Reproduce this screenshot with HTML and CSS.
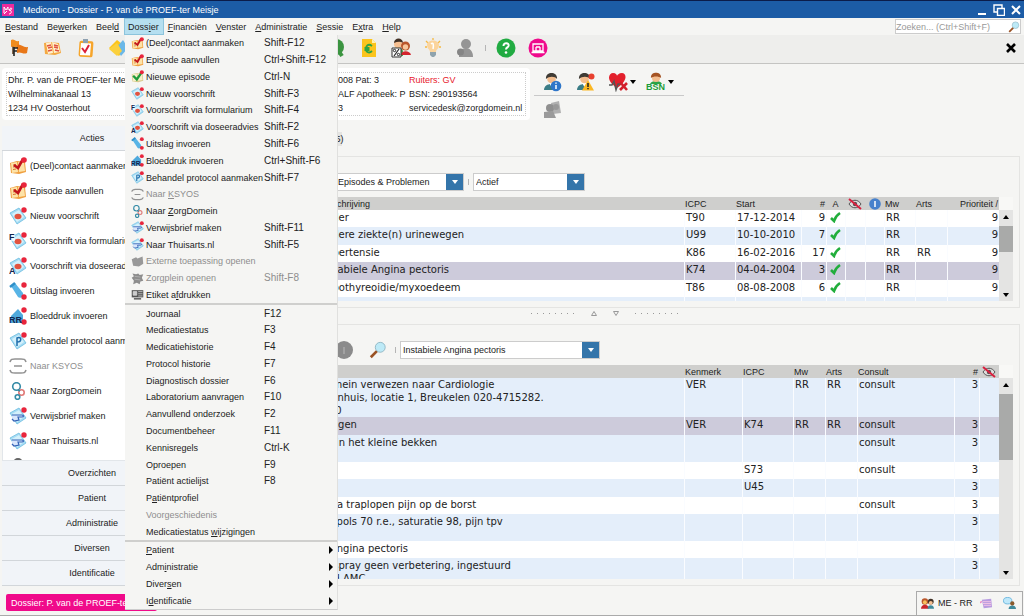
FILE: index.html
```html
<!DOCTYPE html>
<html lang="nl">
<head>
<meta charset="utf-8">
<title>Medicom - Dossier</title>
<link rel="stylesheet" href="styles.css">
</head>
<body>
<svg class="sprite" aria-hidden="true">
  <symbol id="i-book" viewBox="0 0 18 18"><path d="M1 6l7-2 8 1 1 10-7 2-8-1z" fill="#f0a040"/><path d="M2 6l6-1 1 10-6 1zM9 5l6 1 1 8-6 1z" fill="#fde3a8"/><path d="M4 8l3-.5M4 10l3-.5M4 12.500l3-.5" stroke="#d8732c"/><path d="M5 8l4 3 5-9" fill="none" stroke="#c2141c" stroke-width="2.600"/><circle cx="15" cy="3" r="2.800" fill="#e8253c"/></symbol>
  <symbol id="i-bookgreen" viewBox="0 0 18 18"><path d="M1 6l7-2 8 1 1 10-7 2-8-1z" fill="#d9c98c"/><path d="M2 6l6-1 1 10-6 1zM9 5l6 1 1 8-6 1z" fill="#f6efc8"/><path d="M3 8l5 5 7-10" fill="none" stroke="#1e9b3b" stroke-width="3.200"/><circle cx="15" cy="3" r="2.800" fill="#e8253c"/></symbol>
  <symbol id="i-sheet" viewBox="0 0 18 18"><path d="M1 6l9-5 7 10-9 6z" fill="#a5dcf4" stroke="#6dbce0" stroke-width=".8"/><path d="M3 7l7-4 5 7-7 5z" fill="#d4f0fb"/></symbol>
  <symbol id="i-rx" viewBox="0 0 18 18"><use href="#i-sheet"/><ellipse cx="9" cy="9.500" rx="3.500" ry="2.800" fill="#e2533f"/><circle cx="15" cy="3" r="2.700" fill="#e8253c"/></symbol>
  <symbol id="i-rxf" viewBox="0 0 18 18"><use href="#i-rx"/><path d="M0 0h6v9H0z" fill="#fff" opacity=".7"/><text x="0" y="8" class="glyph">F</text></symbol>
  <symbol id="i-rxa" viewBox="0 0 18 18"><use href="#i-rx"/><text x="0" y="17" class="glyph">A</text></symbol>
  <symbol id="i-tube" viewBox="0 0 18 18"><path d="M2 4l4-3 8 10c1 4-3 6-5 4z" fill="#58b4e6"/><path d="M1 5l5-4" stroke="#2f8fc8" stroke-width="2.500"/><circle cx="15" cy="3" r="2.700" fill="#e8253c"/><circle cx="15" cy="15" r="2.700" fill="#e8253c"/></symbol>
  <symbol id="i-rr" viewBox="0 0 18 18"><path d="M2 9l7-7 5 6v8H2z" fill="#4fa9dc"/><circle cx="15" cy="3" r="2.700" fill="#e8253c"/><circle cx="15" cy="15" r="2.700" fill="#e8253c"/><text x="0" y="16" class="glyph">RR</text></symbol>
  <symbol id="i-prot" viewBox="0 0 18 18"><use href="#i-sheet"/><path d="M8 14V6c5-2 5 4 0 4" fill="none" stroke="#1d6cab" stroke-width="1.500"/><circle cx="15" cy="3" r="2.700" fill="#e8253c"/></symbol>
  <symbol id="i-ksyos" viewBox="0 0 18 18"><path d="M1 5c1-3 2-3 5-3h6c3 0 4 0 5 3M1 13c1 3 2 3 5 3h6c3 0 4 0 5-3M5 9h8" fill="none" stroke="#929292" stroke-width="1.600"/></symbol>
  <symbol id="i-zd" viewBox="0 0 18 18"><g fill="none" stroke-width="1.600"><circle cx="7.500" cy="4.500" r="3.800" stroke="#348ba6"/><circle cx="12.500" cy="10.500" r="2.700" stroke="#e07a78"/><circle cx="8.500" cy="15" r="2.300" stroke="#348ba6"/><path d="M9 8l2 1" stroke="#348ba6"/></g></symbol>
  <symbol id="i-hand" viewBox="0 0 18 18"><use href="#i-sheet"/><path d="M3 8h10c2 0 2 2 0 2h-4l1 3-5 1-2-2" fill="#d8e6fc" stroke="#3462b6" stroke-width="1.200"/><circle cx="15" cy="3" r="2.700" fill="#e8253c"/></symbol>
  <symbol id="i-ext" viewBox="0 0 18 18"><path d="M1 6l6-3 2 2 7-3 1 10-6 4-8-1z" fill="#999"/></symbol>
  <symbol id="i-plein" viewBox="0 0 18 18"><path d="M2 2l5 1 3-1 2 2 5-1-2 5 2 4-4 1-1 4-4-2-5 2 1-5-3-4 3-2z" fill="#8d8d8d"/><path d="M5 6l8 1M5 10l8 1" stroke="#bbb"/></symbol>
  <symbol id="i-label" viewBox="0 0 18 18"><path d="M1 3h16v10H1z" fill="#555"/><path d="M3 5h5v5H3zM10 5h6M10 8h6M10 11h6" fill="#ccc" stroke="#ddd"/><path d="M4 15h10" stroke="#555" stroke-width="2"/></symbol>
  <symbol id="i-person-dot" viewBox="0 0 18 18"><path d="M5 18c0-8 8-8 9 0z" fill="#777"/><circle cx="9" cy="6" r="5" fill="#666"/></symbol>
  <symbol id="i-flag" viewBox="0 0 20 20"><path d="M4 3v13" stroke="#5a3a1c" stroke-width="1.500"/><path d="M2 2c3-2 4 2 8 1v7c-4 1-5-3-8-1z" fill="#f08c1e"/><path d="M8 7c3-2 6 3 11 2l-1 6c-4 2-6-2-10 0z" fill="#e87718"/><path d="M5 9v9M5 10h4M5 13h3" stroke="#222" stroke-width="1.600"/></symbol>
  <symbol id="i-news" viewBox="0 0 20 20"><path d="M2 5l6-1 9 1 2 10-6 2-10-1z" fill="#f4a942"/><path d="M4 5l5-1 2 11-5 1zM10 4l6 2 2 8-6 1z" fill="#fff0cd"/><path d="M5 8l4-1M6 10l4-1M6 13l4-1M12 7l4 1M12 9l4 1M13 12l4 1" stroke="#e0523e" stroke-width="1.300"/></symbol>
  <symbol id="i-clip" viewBox="0 0 20 20"><rect x="4" y="3" width="14" height="16" rx="2" fill="#f6a52b" transform="rotate(4 11 11)"/><path d="M6 5l10 .5-1 12-10-.5z" fill="#fff"/><path d="M8 1h5v4H8z" fill="#8da0b0"/><path d="M7 10l3 4 4-7" fill="none" stroke="#dc1f38" stroke-width="2"/></symbol>
  <symbol id="i-folder" viewBox="0 0 20 20"><path d="M1 10l8-8 9 7-7 9z" fill="#fcc419"/><path d="M8 10l7-8 5 8-7 8z" fill="#6ab8e8"/><path d="M1 11l8-6 5 8-5 5z" fill="#fbd03c"/></symbol>
  <symbol id="i-green" viewBox="0 0 20 20"><circle cx="9" cy="9" r="8" fill="#3b9440"/><path d="M11 12l4 6" stroke="#3b9440" stroke-width="4"/></symbol>
  <symbol id="i-euro" viewBox="0 0 20 20"><path d="M3 1h10l4 4v14H3z" fill="#fbc41d"/><path d="M13 1v4h4z" fill="#fff2b0"/><path d="M13 8c-4-3-6 0-6 3s3 5 6 2M5.500 10h5M5.500 12h5" fill="none" stroke="#2da344" stroke-width="1.800"/></symbol>
  <symbol id="i-people" viewBox="0 0 20 20"><path d="M2 13c0-5 9-5 10 0v5H2z" fill="#4aa14e"/><circle cx="7" cy="6" r="4" fill="#f5bf91"/><path d="M3 5c0-6 9-6 9 0-3-2-6-1-9 0z" fill="#403025"/><path d="M10 17c0-5 9-5 10 0z" fill="#d4232d"/><circle cx="14.500" cy="8" r="4.500" fill="#b9562b"/><circle cx="14.500" cy="9" r="2.700" fill="#f7c79c"/></symbol>
  <symbol id="i-users" viewBox="0 0 20 20"><path d="M0 18c0-8 12-8 12 0z" fill="#c9252c"/><circle cx="6" cy="7" r="5" fill="#b9562b"/><circle cx="6" cy="8" r="3" fill="#f7c05c"/><path d="M10 18c0-7 10-7 10 0z" fill="#3f8a9c"/><circle cx="15" cy="7" r="4.500" fill="#403025"/><circle cx="15" cy="9" r="3" fill="#f5bf91"/></symbol>
  <symbol id="i-percent" viewBox="0 0 20 20"><use href="#i-people"/><path d="M1 10h9v9H1z" fill="#fff" stroke="#333"/><path d="M8 11l-5 7" stroke="#222" stroke-width="1.200"/><circle cx="3.500" cy="12.500" r="1.200" fill="none" stroke="#222"/><circle cx="7.500" cy="16.500" r="1.200" fill="none" stroke="#222"/></symbol>
  <symbol id="i-bulb" viewBox="0 0 20 20"><path d="M10 0v2M3 3l2 2M17 3l-2 2M2 9h2M16 9h2" stroke="#f5b942" stroke-width="1.300"/><path d="M7 14c0-3-3-3-3-7 0-6 12-6 12 0 0 4-3 4-3 7z" fill="#fbd49c"/><path d="M8 6c2-2 3 0 2 5" fill="none" stroke="#fff" stroke-width="1.500"/><path d="M7 14h6v3l-2 2H9l-2-2z" fill="#8fa3ad"/></symbol>
  <symbol id="i-grayman" viewBox="0 0 20 20"><circle cx="11" cy="6" r="5" fill="#959595"/><path d="M4 19c-1-11 14-13 14 0z" fill="#959595"/><circle cx="5.500" cy="14" r="3.500" fill="#858585"/></symbol>
  <symbol id="i-help" viewBox="0 0 20 20"><circle cx="10" cy="10" r="9.500" fill="#21ab42"/><path d="M7.500 8c0-4 6-3.500 5 0-.5 1.500-2.500 1.500-2.500 3.500" fill="none" stroke="#fff" stroke-width="2"/><circle cx="10" cy="14.500" r="1.300" fill="#fff"/></symbol>
  <symbol id="i-pink" viewBox="0 0 20 20"><circle cx="10" cy="10" r="9.500" fill="#ef0a8c"/><path d="M5 6h10v7H5zM8 9v4M12 9v4M8 9h4M3.500 14.500h13" fill="none" stroke="#fff" stroke-width="1.300"/></symbol>
  <symbol id="i-man" viewBox="0 0 20 20"><path d="M2 18c0-8 14-8 15 0z" fill="#3b7d86"/><path d="M7 11l2.500 4L12 11z" fill="#fff"/><circle cx="9.500" cy="7" r="4.300" fill="#f3bd8e"/><path d="M4 7c-1-8 12-8 11 0-2-3-8-3-11 0z" fill="#3f3b35"/></symbol>
  <symbol id="i-maninfo" viewBox="0 0 20 20"><use href="#i-man"/><circle cx="14" cy="14" r="5.300" fill="#2f76c9"/><path d="M14 13v4M14 10.500v1.200" stroke="#fff" stroke-width="1.500"/></symbol>
  <symbol id="i-manwarn" viewBox="0 0 20 20"><use href="#i-man"/><circle cx="16.500" cy="4.500" r="3" fill="#e8402f"/><path d="M13 8l6 10.500H7z" fill="#fbb722"/><path d="M13 11v4M13 16v1.200" stroke="#222" stroke-width="1.500"/></symbol>
  <symbol id="i-heart" viewBox="0 0 20 20"><path d="M9 16C-3 8 1 1 5 1c3 0 4 2 4 3 0-1 2-3 5-3 4 0 7 7-5 15z" fill="#e3202c"/><path d="M1 13h3l2-4 2 9 2-6h3" fill="none" stroke="#555" stroke-width="1.400"/><path d="M12 10l7 8M19 11l-7 7" stroke="#d31f2b" stroke-width="2.600"/></symbol>
  <symbol id="i-bsn" viewBox="0 0 20 20"><path d="M4 12c1-4 11-4 12 0z" fill="#2ba346"/><circle cx="10" cy="6" r="4" fill="#f3bd8e"/><path d="M5 6c-1-7 11-7 10 0-2-2-8-2-10 0z" fill="#a55323"/><text x="0" y="18" class="bsn">BSN</text></symbol>
  <symbol id="i-graypair" viewBox="0 0 20 20"><path d="M9 3l8-2 2 12-8 1z" fill="#b0b0b0"/><circle cx="8" cy="8" r="4" fill="#8f8f8f"/><path d="M2 12l9-1 3 7H2z" fill="#9a9a9a"/><circle cx="14" cy="7" r="3" fill="#999"/></symbol>
  <symbol id="i-mag" viewBox="0 0 20 20"><path d="M9 11l-7 7" stroke="#9a5224" stroke-width="3"/><circle cx="12.500" cy="7" r="5.500" fill="#bdeaf7" stroke="#8fb4c2"/></symbol>
  <symbol id="i-check" viewBox="0 0 12 12"><path d="M1 7l3 3c1-3 3-6 6-8" fill="none" stroke="#22ae3c" stroke-width="2.600"/></symbol>
  <symbol id="i-eye" viewBox="0 0 14 12"><path d="M1 6c3-5 9-5 12 0-3 5-9 5-12 0z" fill="#ddd" stroke="#555"/><circle cx="7" cy="6" r="2.200" fill="#555"/><path d="M1 1l12 10" stroke="#d8203f" stroke-width="2"/></symbol>
  <symbol id="i-info" viewBox="0 0 12 12"><circle cx="6" cy="6" r="5.800" fill="#4781cc"/><path d="M6 3v6" stroke="#fff" stroke-width="1.500"/></symbol>
  <symbol id="i-down" viewBox="0 0 6 4"><path d="M0 0h6L3 4z"/></symbol>
  <symbol id="i-up" viewBox="0 0 6 4"><path d="M0 4h6L3 0z"/></symbol>
  <symbol id="i-right" viewBox="0 0 4 8"><path d="M0 0l4 4-4 4z"/></symbol>
  <symbol id="i-cal" viewBox="0 0 14 12"><path d="M2 2l10-1 1 9-9 1z" fill="#b79be0"/><path d="M3 4h9M3 6h9M4 8h8" stroke="#f3c3e4"/><path d="M0 4l2-1v2l-2 1z" fill="#e78cc4"/></symbol>
  <symbol id="i-chat" viewBox="0 0 14 14"><ellipse cx="5" cy="4" rx="4.500" ry="3.500" fill="#bfe8fa" stroke="#6ab6dd"/><circle cx="10" cy="7" r="2.300" fill="#8a5a2c"/><path d="M6 13c0-5 8-5 8 0z" fill="#3f8a9c"/></symbol>
</svg>

<div class="app">
  <header class="titlebar">
    <svg class="logo" viewBox="0 0 12 12"><path d="M0 0h12v12H0z" fill="#ee2a9c"/><path d="M2 9V3l2 3 2-3v3M7 6c3-5 4 1 0 0 3 0 3 4 0 4M2 10l3-3" fill="none" stroke="#fff"/></svg>
    <h1 class="title">Medicom - Dossier - P. van de PROEF-ter Meisje</h1>
    <div class="window-buttons">
      <button aria-label="Minimaliseren"><svg viewBox="0 0 12 12"><path d="M2 10h8" stroke="#fff" stroke-width="2"/></svg></button>
      <button aria-label="Herstellen"><svg viewBox="0 0 12 12"><path d="M4 8H1V1h8v3M4.500 4.500h7v7h-7z" fill="none" stroke="#fff" stroke-width="1.400"/></svg></button>
      <button aria-label="Sluiten"><svg viewBox="0 0 12 12"><path d="M2 2l8 8M10 2l-8 8" stroke="#fff" stroke-width="2"/></svg></button>
    </div>
  </header>

  <nav class="menubar">
    <button><u>B</u>estand</button><button>Be<u>w</u>erken</button><button>Beel<u>d</u></button><button class="open">Doss<u>i</u>er</button><button><u>F</u>inanciën</button><button><u>V</u>enster</button><button><u>A</u>dministratie</button><button><u>S</u>essie</button><button>E<u>x</u>tra</button><button><u>H</u>elp</button>
    <div class="search"><input type="text" aria-label="Zoeken" placeholder="Zoeken... (Ctrl+Shift+F)"><svg><use href="#i-mag"/></svg></div>
  </nav>

  <div class="toolbar">
    <div class="tools wide">
      <button aria-label="Vlaggen"><svg><use href="#i-flag"/></svg></button><button aria-label="Journaal"><svg><use href="#i-news"/></svg></button><button aria-label="Actielijst"><svg><use href="#i-clip"/></svg></button><button aria-label="Dossiers"><svg><use href="#i-folder"/></svg></button>
    </div>
    <div class="tools">
      <button aria-label="Zoek"><svg><use href="#i-green"/></svg></button><button aria-label="Declaratie"><svg><use href="#i-euro"/></svg></button><button aria-label="Korting"><svg><use href="#i-percent"/></svg></button><button aria-label="Tip"><svg><use href="#i-bulb"/></svg></button><button aria-label="Patiënt"><svg><use href="#i-grayman"/></svg></button><span class="tick"></span><button aria-label="Help"><svg><use href="#i-help"/></svg></button><button aria-label="Portaal"><svg><use href="#i-pink"/></svg></button>
    </div>
    <button class="close" aria-label="Sluit dossier"><svg viewBox="0 0 10 10"><path d="M1 1l8 8M9 1L1 9" stroke="#000" stroke-width="2.600"/></svg></button>
  </div>

  <section class="patient">
    <div class="card"><div class="card-in">
      <p>Dhr. P. van de PROEF-ter Meisje<br>Wilhelminakanaal 13<br>1234 HV Oosterhout</p>
      <p>008 Pat: 3<br>ALF Apotheek: P<br>3</p>
      <p><span class="red">Ruiters: GV</span><br>BSN: 290193564<br>servicedesk@zorgdomein.nl</p>
    </div></div>
    <div class="flags">
      <div class="flag-row"><button aria-label="Patiëntinfo"><svg><use href="#i-maninfo"/></svg></button><button aria-label="Waarschuwing"><svg><use href="#i-manwarn"/></svg></button><button aria-label="Contra-indicaties"><svg><use href="#i-heart"/></svg><svg class="caret"><use href="#i-down"/></svg></button><button aria-label="BSN"><svg><use href="#i-bsn"/></svg><svg class="caret"><use href="#i-down"/></svg></button></div>
      <div class="flag-row second"><button aria-label="Relaties"><svg><use href="#i-graypair"/></svg></button></div>
    </div>
  </section>

  <div class="workspace">
    <aside class="sidebar">
      <button class="cat">Acties</button>
      <div class="actions">
        <button><svg><use href="#i-book"/></svg>(Deel)contact aanmaken</button>
        <button><svg><use href="#i-book"/></svg>Episode aanvullen</button>
        <button><svg><use href="#i-rx"/></svg>Nieuw voorschrift</button>
        <button><svg><use href="#i-rxf"/></svg>Voorschrift via formularium</button>
        <button><svg><use href="#i-rxa"/></svg>Voorschrift via doseeradvies</button>
        <button><svg><use href="#i-tube"/></svg>Uitslag invoeren</button>
        <button><svg><use href="#i-rr"/></svg>Bloeddruk invoeren</button>
        <button><svg><use href="#i-prot"/></svg>Behandel protocol aanmaken</button>
        <button disabled><svg><use href="#i-ksyos"/></svg>Naar KSYOS</button>
        <button><svg><use href="#i-zd"/></svg>Naar ZorgDomein</button>
        <button><svg><use href="#i-hand"/></svg>Verwijsbrief maken</button>
        <button><svg><use href="#i-hand"/></svg>Naar Thuisarts.nl</button>
        <button aria-label="Externe toepassing"><svg><use href="#i-person-dot"/></svg></button>
      </div>
      <button class="cat">Overzichten</button><button class="cat">Patient</button><button class="cat">Administratie</button><button class="cat">Diversen</button><button class="cat">Identificatie</button>
    </aside>

    <main class="main">
      <div class="tabs"><button>Episodes en journaal (5)</button></div>
      <section class="panel">
        <div class="filters">
          <span class="select first"><select aria-label="Soort"><option>Episodes &amp; Problemen</option></select><svg><use href="#i-down"/></svg></span>
          <span class="tick"></span>
          <span class="select status"><select aria-label="Status"><option>Actief</option></select><svg><use href="#i-down"/></svg></span>
        </div>
        <div class="list short">
          <div class="list-view">
            <table class="episodes">
              <colgroup><col class="w116"><col><col class="w51"><col class="w66"><col class="w25"><col class="w19"><col class="w20"><col class="w19"><col class="w31"><col class="w32"><col class="w52"></colgroup>
              <thead><tr><th></th><th>Omschrijving</th><th>ICPC</th><th>Start</th><th class="r">#</th><th class="c">A</th><th class="c"><svg class="eye"><use href="#i-eye"/></svg></th><th class="c"><svg class="info"><use href="#i-info"/></svg></th><th>Mw</th><th>Arts</th><th class="r">Prioriteit /</th></tr></thead>
              <tbody>
                <tr><td></td><td>Ander</td><td>T90</td><td>17-12-2014</td><td class="r">9</td><td class="c"><svg class="check"><use href="#i-check"/></svg></td><td></td><td></td><td>RR</td><td></td><td class="r">9</td></tr>
                <tr><td></td><td>Andere ziekte(n) urinewegen</td><td>U99</td><td>10-10-2010</td><td class="r">7</td><td class="c"><svg class="check"><use href="#i-check"/></svg></td><td></td><td></td><td>RR</td><td></td><td class="r">9</td></tr>
                <tr><td></td><td>Hypertensie</td><td>K86</td><td>16-02-2016</td><td class="r">17</td><td class="c"><svg class="check"><use href="#i-check"/></svg></td><td></td><td></td><td>RR</td><td>RR</td><td class="r">9</td></tr>
                <tr class="sel"><td></td><td>Instabiele Angina pectoris</td><td>K74</td><td>04-04-2004</td><td class="r">3</td><td class="c"><svg class="check"><use href="#i-check"/></svg></td><td></td><td></td><td>RR</td><td></td><td class="r">9</td></tr>
                <tr><td></td><td>Hypothyreoidie/myxoedeem</td><td>T86</td><td>08-08-2008</td><td class="r">6</td><td class="c"><svg class="check"><use href="#i-check"/></svg></td><td></td><td></td><td>RR</td><td></td><td class="r">9</td></tr>
                <tr><td></td><td></td><td></td><td></td><td></td><td></td><td></td><td></td><td></td><td></td><td></td></tr>
              </tbody>
            </table>
          </div>
          <div class="scroll"><span class="corner"></span><svg><use href="#i-up"/></svg><span class="thumb small"></span><svg class="end"><use href="#i-down"/></svg></div>
        </div>
      </section>

      <div class="splitter"><span class="dots"></span><svg viewBox="0 0 6 5"><path d="M.5 4.500h5L3 .5z" fill="none" stroke="#999"/></svg><svg viewBox="0 0 6 5"><path d="M.5 .5h5L3 4.500z" fill="none" stroke="#999"/></svg><span class="dots"></span></div>

      <section class="panel grow">
        <div class="filters">
          <svg class="big-info" viewBox="0 0 18 18"><circle cx="9" cy="9" r="9" fill="#8b8b8b"/><path d="M9 6v7" stroke="#aaa" stroke-width="1.500"/></svg>
          <svg class="big-mag"><use href="#i-mag"/></svg>
          <span class="tick"></span>
          <span class="select episode"><select aria-label="Episode"><option>Instabiele Angina pectoris</option></select><svg><use href="#i-down"/></svg></span>
        </div>
        <div class="list">
          <div class="list-view">
            <table class="journal">
              <colgroup><col class="w75"><col><col class="w58"><col class="w51"><col class="w32"><col class="w32"><col class="w97"><col class="w25"><col class="w20"></colgroup>
              <thead><tr><th></th><th>Tekst</th><th>Kenmerk</th><th>ICPC</th><th>Mw</th><th>Arts</th><th>Consult</th><th class="r">#</th><th class="c"><svg class="eye"><use href="#i-eye"/></svg></th></tr></thead>
              <tbody>
                <tr class="tint lines3"><td></td><td>Via Zorgdomein verwezen naar Cardiologie<br>In het Ziekenhuis, locatie 1, Breukelen 020-4715282.<br>0204715280</td><td>VER</td><td></td><td>RR</td><td>RR</td><td>consult</td><td class="r">3</td><td></td></tr>
                <tr class="sel"><td></td><td>RR bevindingen</td><td>VER</td><td>K74</td><td>RR</td><td>RR</td><td>consult</td><td class="r">3</td><td></td></tr>
                <tr class="tint lines2"><td></td><td>Zwellingen in het kleine bekken</td><td></td><td></td><td></td><td></td><td>consult</td><td class="r">3</td><td></td></tr>
                <tr><td></td><td></td><td></td><td>S73</td><td></td><td></td><td>consult</td><td class="r">3</td><td></td></tr>
                <tr class="tint"><td></td><td></td><td></td><td>U45</td><td></td><td></td><td></td><td class="r">3</td><td></td></tr>
                <tr><td></td><td>Benauwd, na traplopen pijn op de borst</td><td></td><td></td><td></td><td></td><td>consult</td><td class="r">3</td><td></td></tr>
                <tr class="tint lines2"><td></td><td>RR 120/80, pols 70 r.e., saturatie 98, pijn tpv</td><td></td><td></td><td></td><td></td><td></td><td class="r">3</td><td></td></tr>
                <tr><td></td><td>Instabiele Angina pectoris</td><td></td><td></td><td></td><td></td><td></td><td class="r">3</td><td></td></tr>
                <tr class="tint lines2"><td></td><td>Na 2x nitrospray geen verbetering, ingestuurd<br>naar de SEH AMC</td><td></td><td></td><td></td><td></td><td></td><td class="r">3</td><td></td></tr>
              </tbody>
            </table>
          </div>
          <div class="scroll"><span class="corner"></span><svg><use href="#i-up"/></svg><span class="thumb large"></span><svg class="end"><use href="#i-down"/></svg></div>
        </div>
      </section>
    </main>
  </div>

  <footer class="statusbar">
    <button class="dossier-tab">Dossier: P. van de PROEF-ter Meisje</button>
    <div class="user"><svg><use href="#i-users"/></svg><span>ME - RR</span><svg class="push"><use href="#i-cal"/></svg><svg><use href="#i-chat"/></svg></div>
  </footer>

  <div class="dropdown" role="menu">
    <button><svg><use href="#i-book"/></svg><span>(Deel)contact aanmaken</span><kbd>Shift-F12</kbd></button>
    <button><svg><use href="#i-book"/></svg><span>Episode aanvullen</span><kbd>Ctrl+Shift-F12</kbd></button>
    <button><svg><use href="#i-bookgreen"/></svg><span>Nieuwe episode</span><kbd>Ctrl-N</kbd></button>
    <button><svg><use href="#i-rx"/></svg><span>Nieuw voorschrift</span><kbd>Shift-F3</kbd></button>
    <button><svg><use href="#i-rxf"/></svg><span>Voorschrift via formularium</span><kbd>Shift-F4</kbd></button>
    <button><svg><use href="#i-rxa"/></svg><span>Voorschrift via doseeradvies</span><kbd>Shift-F2</kbd></button>
    <button><svg><use href="#i-tube"/></svg><span>Uitslag invoeren</span><kbd>Shift-F6</kbd></button>
    <button><svg><use href="#i-rr"/></svg><span>Bloeddruk invoeren</span><kbd>Ctrl+Shift-F6</kbd></button>
    <button><svg><use href="#i-prot"/></svg><span>Behandel protocol aanmaken</span><kbd>Shift-F7</kbd></button>
    <button disabled><svg><use href="#i-ksyos"/></svg><span>Naar <u>K</u>SYOS</span></button>
    <button><svg><use href="#i-zd"/></svg><span>Naar <u>Z</u>orgDomein</span></button>
    <button><svg><use href="#i-hand"/></svg><span>Verwijsbrief maken</span><kbd>Shift-F11</kbd></button>
    <button><svg><use href="#i-hand"/></svg><span>Naar Thuisarts.nl</span><kbd>Shift-F5</kbd></button>
    <button disabled><svg><use href="#i-ext"/></svg><span>Externe toepassing openen</span></button>
    <button disabled><svg><use href="#i-plein"/></svg><span>Zorgplein openen</span><kbd>Shift-F8</kbd></button>
    <button><svg><use href="#i-label"/></svg><span>Etiket a<u>f</u>drukken</span></button>
    <hr>
    <button><span>Journaal</span><kbd>F12</kbd></button>
    <button><span>Medicatiestatus</span><kbd>F3</kbd></button>
    <button><span>Medicatiehistorie</span><kbd>F4</kbd></button>
    <button><span>Protocol historie</span><kbd>F7</kbd></button>
    <button><span>Diagnostisch dossier</span><kbd>F6</kbd></button>
    <button><span>Laboratorium aanvragen</span><kbd>F10</kbd></button>
    <button><span>Aanvullend onderzoek</span><kbd>F2</kbd></button>
    <button><span>Documentbeheer</span><kbd>F11</kbd></button>
    <button><span>Kennisregels</span><kbd>Ctrl-K</kbd></button>
    <button><span>Oproepen</span><kbd>F9</kbd></button>
    <button><span>Patiënt actielijst</span><kbd>F8</kbd></button>
    <button><span>P<u>a</u>tiëntprofiel</span></button>
    <button disabled><span>Voorgeschiedenis</span></button>
    <button><span>Medicatiestatus <u>w</u>ijzigingen</span></button>
    <hr>
    <button><span><u>P</u>atient</span><svg class="sub"><use href="#i-right"/></svg></button>
    <button><span>Adm<u>i</u>nistratie</span><svg class="sub"><use href="#i-right"/></svg></button>
    <button><span>Diver<u>s</u>en</span><svg class="sub"><use href="#i-right"/></svg></button>
    <button><span>I<u>d</u>entificatie</span><svg class="sub"><use href="#i-right"/></svg></button>
  </div>
</div>
</body>
</html>
```
FILE: styles.css
```css
* { box-sizing: border-box; }
body { margin: 0; font: 9px/12px "Liberation Sans", Arial, sans-serif; color: #222; background: #f5f5f3; }
button { font: inherit; color: inherit; background: none; border: 0; padding: 0; margin: 0; text-align: left; white-space: nowrap; }
button:disabled { color: #8e8e8e; }
p, h1 { margin: 0; font-size: inherit; font-weight: normal; }
svg { display: block; flex: none; }
.sprite { display: none; }
.glyph { font: bold 9px "Liberation Sans", sans-serif; fill: #10254e; }
.bsn { font: bold 9px "Liberation Sans", sans-serif; fill: #1c9c3a; }
.app { position: relative; display: flex; flex-direction: column; height: 100vh; overflow: hidden; border-bottom: 1px solid #aaa; }

.titlebar { display: flex; align-items: center; gap: 9px; height: 18px; padding: 0 2px; background: #1c5ca6; border-top: 1px solid #0b1c4a; color: #fff; }
.logo { width: 12px; height: 12px; }
.title { flex: 1; }
.window-buttons { display: flex; gap: 5px; }
.window-buttons svg { width: 12px; height: 12px; }

.menubar { display: flex; height: 17px; padding-left: 1px; background: #f5f5f3; }
.menubar button { padding: 0 5px 0 4px; }
.menubar .open { background: #b5dff0; outline: 1px solid #8cc4dc; outline-offset: -1px; }
.search { display: flex; align-items: center; width: 126px; height: 15px; margin: 1px 3px 0 auto; background: #fff; border: 1px solid #ccc; }
.search input { flex: 1; min-width: 0; border: 0; padding: 0; background: none; font: inherit; outline: 0; }
.search input::placeholder { color: #999; opacity: 1; }
.search svg { width: 12px; height: 12px; }

.toolbar { display: flex; align-items: center; height: 29px; padding: 0 8px 2px 2px; background: #eeeeec; border-bottom: 1px solid #c4c4c2; }
.tools { display: flex; align-items: center; }
.tools.wide { width: 319px; }
.tools button { display: flex; justify-content: center; width: 32px; }
.tools.wide button { width: 33px; }
.tools svg { width: 20px; height: 20px; }
.tick { width: 1px; height: 6px; background: #b5b5b5; }
.tools .tick { margin: 0 4px; }
.close { margin-left: auto; }
.close svg { width: 10px; height: 10px; }

.patient { display: flex; gap: 4px; height: 62px; padding: 4px 2px; }
.card { width: 528px; height: 52px; padding: 4px; background: #fff; border-radius: 4px; }
.card-in { display: grid; grid-template-columns: 330px 71px auto; height: 44px; padding: 0 1px; border: 1px dotted #ccc; line-height: 14px; white-space: nowrap; }
.red { color: #e8202c; }
.flags { width: 150px; }
.flag-row { display: flex; align-items: center; height: 28px; padding-left: 8px; border-bottom: 1px solid #c9c9c9; }
.flag-row.second { border: 0; }
.flag-row button { display: flex; align-items: center; min-width: 33px; }
.flag-row button + button + button { width: 40px; }
.flag-row svg { width: 20px; height: 20px; }
.flag-row .caret { width: 6px; height: 4px; margin-left: 2px; }

.workspace { flex: 1; min-height: 0; display: flex; gap: 8px; padding: 0 4px 0 2px; }
.sidebar { display: flex; flex-direction: column; width: 180px; }
.cat { flex: none; height: 25px; text-align: center; background: #f1f4f8; border-bottom: 1px solid #d2d6da; }
.actions { flex: 1; min-height: 0; overflow: hidden; padding-top: 2px; background: #fff; border: 1px solid #e2e6ea; border-top: 0; }
.actions button { display: flex; align-items: center; gap: 3px; width: 100%; height: 25px; padding-left: 6px; }
.actions svg { width: 18px; height: 18px; }

.main { flex: 1; min-width: 0; display: flex; flex-direction: column; }
.tabs { display: flex; height: 30px; padding: 6px 0 10px 56px; }
.tabs button { background: #e4e4e2; width: 96px; text-align: right; padding-right: 2px; }
.panel { display: flex; flex-direction: column; padding: 0 6px 6px 10px; border: 1px solid #e4e4e2; }
.panel.grow { flex: 1; min-height: 0; }
.filters { display: flex; align-items: center; gap: 8px; height: 40px; padding: 10px 0 0 134px; }
.select { position: relative; height: 18px; }
.select select { appearance: none; width: 100%; height: 100%; padding: 0 18px 0 2px; border: 1px solid #ccc; border-radius: 0; background: linear-gradient(#3475aa, #3475aa) right / 17px 100% no-repeat #fff; font: inherit; color: #222; }
.select svg { position: absolute; right: 6px; top: 7px; width: 6px; height: 4px; fill: #fff; pointer-events: none; }
.select.first { width: 129px; }
.filters .tick { margin: 0 -4px; }
.select.status { width: 112px; }
.select.episode { width: 200px; }
.big-info { width: 18px; height: 18px; }
.big-mag { width: 18px; height: 18px; margin: 0 4px 0 8px; }

.list { flex: 1; min-height: 0; display: flex; }
.list.short { flex: none; height: 104px; }
.list-view { flex: 1; min-width: 0; overflow: hidden; }
table { width: 100%; table-layout: fixed; border-spacing: 0; font: 10px/13px "DejaVu Sans", Verdana, sans-serif; }
th { height: 13px; padding: 0 1px; background: #cfcfcd; font: 9px/12px "Liberation Sans", Arial, sans-serif; text-align: left; white-space: nowrap; }
td { height: 17px; padding: 1px 1px 0; vertical-align: top; border-left: 1px solid #fafcff; white-space: nowrap; background: #fff; }
td:nth-child(-n+2) { border-left: 0; }
.episodes td:nth-child(2) { padding-left: 2px; }
.journal td:nth-child(2) { padding-left: 2px; }
.r { text-align: right; }
.c { text-align: center; }
.c svg { margin: auto; }
.episodes tr:nth-child(even) td, .tint td { height: 18px; background: #e4eefa; }
tr.sel td, .episodes tr.sel td { height: 18px; background: #cdcbdb; }
.lines2 td { height: 27px; }
.lines3 td { height: 39px; padding-top: 0; }
.check { width: 12px; height: 12px; }
.eye { width: 14px; height: 12px; }
.info { width: 12px; height: 12px; }
.w19 { width: 19px; } .w20 { width: 20px; } .w25 { width: 25px; } .w31 { width: 31px; } .w32 { width: 32px; }
.w51 { width: 51px; } .w52 { width: 52px; } .w58 { width: 58px; } .w66 { width: 66px; } .w75 { width: 75px; }
.w97 { width: 97px; } .w116 { width: 116px; }
.scroll { display: flex; flex-direction: column; align-items: center; width: 14px; background: #e4e4e3; }
.scroll svg { width: 6px; height: 4px; margin: 5px 0 7px; }
.scroll .end { margin: auto 0 4px; }
.corner { width: 100%; height: 13px; background: #f8f8f6; }
.thumb { width: 100%; background: #a9aaa9; }
.thumb.small { height: 26px; }
.thumb.large { height: 66px; }

.splitter { display: flex; justify-content: center; align-items: center; gap: 16px; height: 16px; padding-bottom: 5px; }
.splitter svg { width: 6px; height: 5px; }
.dots { width: 44px; height: 1px; background: repeating-linear-gradient(90deg, #999 0 1px, transparent 1px 6px); }

.statusbar { display: flex; align-items: center; justify-content: space-between; height: 29px; padding: 4px 1px 0 6px; }
.dossier-tab { width: 151px; height: 17px; padding: 0 5px; background: #f00a8a; color: #fff; border-radius: 2px; }
.user { display: flex; align-items: center; gap: 4px; width: 107px; height: 24px; padding: 0 6px 0 4px; border: 1px solid #aaa; border-bottom: 0; }
.user svg { width: 13px; height: 13px; }
.user .push { margin: 0 6px 0 auto; }

.dropdown { position: absolute; left: 125px; top: 35px; bottom: 5px; width: 213px; display: flex; flex-direction: column; background: #f5f5f3; border-right: 1px solid #e0e0de; border-bottom: 1px solid #ccc; }
.dropdown button { flex: 1; display: grid; grid-template-columns: 12px minmax(0, 1fr) 69px; column-gap: 3px; align-items: center; padding: 0 4px 0 6px; }
.dropdown svg { width: 13px; height: 13px; }
.dropdown span { grid-column: 2; }
.dropdown kbd { font: 10px/12px "Liberation Sans", Arial, sans-serif; }
.dropdown .sub { width: 4px; height: 8px; justify-self: end; fill: #000; }
.dropdown hr { width: 100%; height: 2px; margin: 0; border: 0; background: #cfcfcd; }
```
